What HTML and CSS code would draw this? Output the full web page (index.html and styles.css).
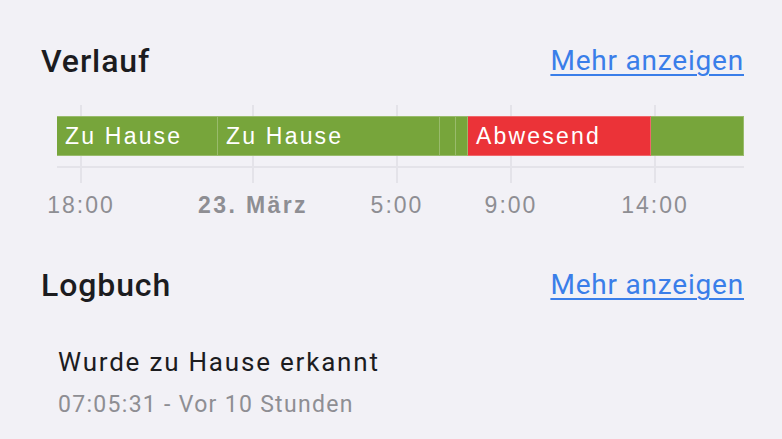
FILE: index.html
```html
<!DOCTYPE html>
<html lang="de">
<head>
<meta charset="utf-8">
<link rel="stylesheet" href="styles.css">
</head>
<body>
<div class="page">
  <section class="card">
    <div class="card-header">
      <h2 class="title">Verlauf</h2>
      <a class="more" href="#">Mehr anzeigen</a>
    </div>
    <div class="chart">
      <div class="tick" style="left:24px"></div>
      <div class="tick" style="left:196px"></div>
      <div class="tick" style="left:340px"></div>
      <div class="tick" style="left:454px"></div>
      <div class="tick" style="left:598px"></div>
      <div class="bar">
        <div class="seg home" style="width:161px"><span>Zu Hause</span></div>
        <div class="seg home" style="width:222px"><span>Zu Hause</span></div>
        <div class="seg home" style="width:16px"></div>
        <div class="seg home" style="width:12px"></div>
        <div class="seg away" style="width:183px"><span>Abwesend</span></div>
        <div class="seg home" style="width:93px"></div>
      </div>
      <div class="axis"></div>
      <div class="label" style="left:24px">18:00</div>
      <div class="label bold" style="left:196px">23. März</div>
      <div class="label" style="left:340px">5:00</div>
      <div class="label" style="left:454px">9:00</div>
      <div class="label" style="left:598px">14:00</div>
    </div>
  </section>
  <section class="card logbook">
    <div class="card-header">
      <h2 class="title">Logbuch</h2>
      <a class="more" href="#">Mehr anzeigen</a>
    </div>
    <div class="entry">
      <div class="entry-title">Wurde zu Hause erkannt</div>
      <div class="entry-sub">07:05:31 - Vor 10 Stunden</div>
    </div>
  </section>
</div>
</body>
</html>
```

FILE: styles.css
```css
html, body {
  margin: 0;
  padding: 0;
  background: #f2f1f6;
}
body {
  font-family: Roboto, "Noto Sans", sans-serif;
  color: #1c1c1f;
}
.page {
  padding: 41px 38px 0 41px;
}
.card-header {
  display: flex;
  justify-content: space-between;
  align-items: center;
  height: 40px;
}
.title {
  margin: 0;
  font-size: 32px;
  font-weight: 500;
  letter-spacing: 0.9px;
  line-height: 40px;
}
.more {
  color: #3a7ee9;
  font-size: 28px;
  line-height: 40px;
  letter-spacing: 0.8px;
  text-decoration: underline;
  text-decoration-thickness: 2px;
  text-underline-offset: 4px;
}
.chart {
  position: relative;
  margin: 24px 0 0 16px;
  height: 120px;
}
.tick {
  position: absolute;
  top: 0;
  width: 2px;
  margin-left: -1px;
  height: 78px;
  background: #e4e3e9;
}
.bar {
  position: absolute;
  top: 11px;
  left: 0;
  right: 0;
  height: 40px;
  display: flex;
}
.seg {
  box-sizing: border-box;
  height: 40px;
  border: 1px solid rgba(255,255,255,0.25);
  border-left: none;
  display: flex;
  align-items: center;
  overflow: hidden;
  white-space: nowrap;
}
.seg span {
  padding-left: 8px;
  font-family: "Liberation Sans", Arial, sans-serif;
  font-size: 23px;
  letter-spacing: 2.2px;
  color: #fff;
}
.home { background: #77a53b; }
.away { background: #eb3338; }
.axis {
  position: absolute;
  top: 61px;
  left: 0;
  right: 0;
  height: 2px;
  background: #e4e3e9;
}
.label {
  position: absolute;
  top: 88px;
  transform: translateX(-50%);
  font-family: "Liberation Sans", Arial, sans-serif;
  font-size: 23px;
  line-height: 24px;
  letter-spacing: 2px;
  color: #8e8e93;
  white-space: nowrap;
}
.label.bold {
  font-weight: bold;
  letter-spacing: 2.4px;
}
.logbook {
  margin-top: 40px;
}
.entry {
  padding: 39px 0 0 17px;
}
.entry-title {
  font-size: 26px;
  line-height: 36px;
  letter-spacing: 1.8px;
}
.entry-sub {
  margin-top: 9px;
  font-size: 23px;
  line-height: 32px;
  letter-spacing: 1.3px;
  color: #8e8e93;
}
```
